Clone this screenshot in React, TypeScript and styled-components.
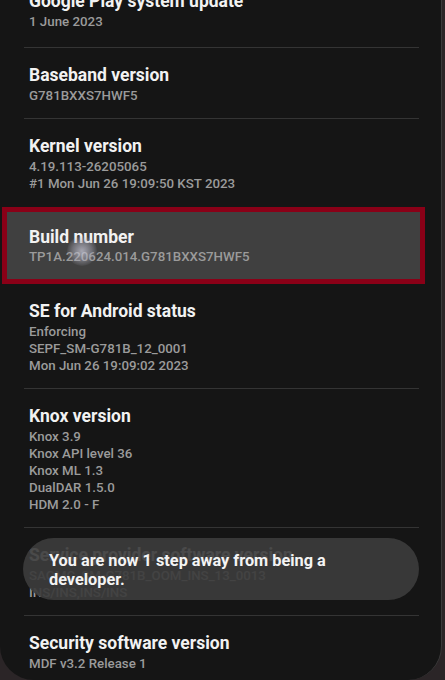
import { styled, createGlobalStyle } from "styled-components";

const GlobalStyle = createGlobalStyle`
  html, body {
    margin: 0;
    padding: 0;
    background: #2b2527;
  }
  body {
    font-family: Roboto, "Noto Sans", "Liberation Sans", sans-serif;
  }
`;

interface InfoItem {
  title: string;
  lines: string[];
}

const topItems: InfoItem[] = [
  { title: "Google Play system update", lines: ["1 June 2023"] },
  { title: "Baseband version", lines: ["G781BXXS7HWF5"] },
  {
    title: "Kernel version",
    lines: ["4.19.113-26205065", "#1 Mon Jun 26 19:09:50 KST 2023"],
  },
];

const bottomItems: InfoItem[] = [
  {
    title: "SE for Android status",
    lines: ["Enforcing", "SEPF_SM-G781B_12_0001", "Mon Jun 26 19:09:02 2023"],
  },
  {
    title: "Knox version",
    lines: [
      "Knox 3.9",
      "Knox API level 36",
      "Knox ML 1.3",
      "DualDAR 1.5.0",
      "HDM 2.0 - F",
    ],
  },
  {
    title: "Service provider software version",
    lines: ["SAOMC_SM-G781B_OOM_INS_13_0013", "INS/INS,INS/INS"],
  },
  { title: "Security software version", lines: ["MDF v3.2 Release 1"] },
];

export default function App() {
  return (
    <>
      <GlobalStyle />
      <Screen>
        <List>
          {topItems.map((item, index) => (
            <Row
              key={item.title}
              $first={index === 0}
              $noLine={index === topItems.length - 1}
            >
              <Title>{item.title}</Title>
              <SubLines>
                {item.lines.map((line) => (
                  <Sub key={line}>{line}</Sub>
                ))}
              </SubLines>
            </Row>
          ))}

          <Highlight>
            <Title>Build number</Title>
            <SubLines $tight>
              <Sub>TP1A.220624.014.G781BXXS7HWF5</Sub>
            </SubLines>
            <Touch />
          </Highlight>

          {bottomItems.map((item, index) => (
            <Row
              key={item.title}
              $noLine={index === bottomItems.length - 1}
            >
              <Title>{item.title}</Title>
              <SubLines>
                {item.lines.map((line) => (
                  <Sub key={line}>{line}</Sub>
                ))}
              </SubLines>
            </Row>
          ))}
        </List>

        <Toast>You are now 1 step away from being a developer.</Toast>
      </Screen>
    </>
  );
}

const Screen = styled.div`
  position: relative;
  width: 441px;
  height: 680px;
  overflow: hidden;
  background: #151515;
  border-bottom-left-radius: 34px;
  border-bottom-right-radius: 34px;
  border-right: 1px solid #3a3a3a;
`;

const List = styled.div`
  display: flex;
  flex-direction: column;
  margin-top: -26px;
`;

const Row = styled.div<{ $first?: boolean; $noLine?: boolean }>`
  margin: 0 22px 0 24px;
  padding: 17px 0 ${(p) => (p.$first ? "17px" : "14px")} 5px;
  border-bottom: 1px solid ${(p) => (p.$noLine ? "transparent" : "#343434")};
`;

const Title = styled.div`
  color: #f2f2f2;
  font-size: 17.5px;
  font-weight: 700;
  line-height: 20px;
  white-space: nowrap;
`;

const SubLines = styled.div<{ $tight?: boolean }>`
  display: flex;
  flex-direction: column;
  margin-top: ${(p) => (p.$tight ? "1px" : "2px")};
`;

const Sub = styled.div`
  color: #9b9b9b;
  font-size: 13.3px;
  font-weight: 500;
  line-height: 17px;
  white-space: nowrap;
`;

const Highlight = styled.div`
  position: relative;
  margin: 0 16px 0 2px;
  padding: 15px 0 14px 22px;
  border: 5px solid #8a0017;
  background: #404040;
`;

const Touch = styled.div`
  position: absolute;
  left: 60px;
  top: 24px;
  width: 30px;
  height: 30px;
  border-radius: 50%;
  background: radial-gradient(
    circle,
    rgba(200, 200, 215, 0.75) 0%,
    rgba(170, 170, 185, 0.45) 45%,
    rgba(120, 120, 130, 0) 75%
  );
`;

const Toast = styled.div`
  position: absolute;
  left: 23px;
  top: 538px;
  width: 396px;
  height: 62px;
  box-sizing: border-box;
  padding: 13px 40px 0 26px;
  border-radius: 31px;
  background: rgba(60, 60, 60, 0.92);
  color: #f4f4f4;
  font-size: 16.3px;
  font-weight: 700;
  line-height: 19px;
`;
